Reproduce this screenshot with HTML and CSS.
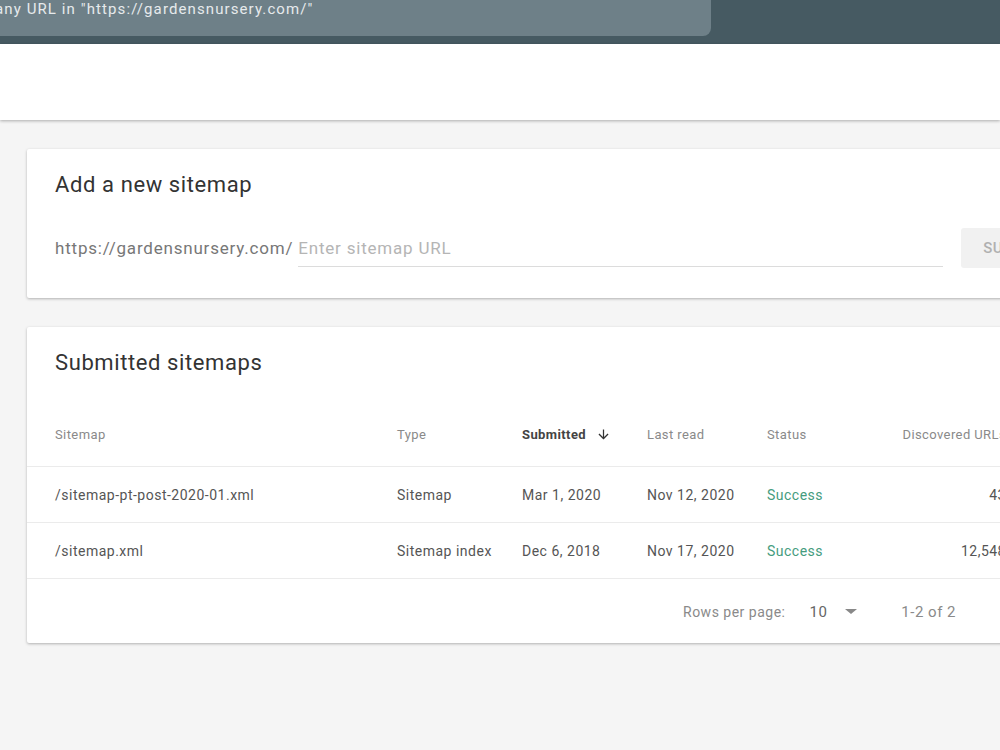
FILE: index.html
```html
<!DOCTYPE html>
<html lang="en">

<head>
    <meta charset="UTF-8">
    <title>Sitemaps</title>
    <link rel="stylesheet" href="styles.css">
</head>

<body>

    <div class="topbar">
        <div class="search">any URL in "https://gardensnursery.com/"</div>
    </div>

    <div class="subheader"></div>

    <div class="content">
        <div class="card add-card">
            <h2 class="card-title">Add a new sitemap</h2>
            <div class="add-row">
                <span class="prefix">https://gardensnursery.com/</span>
                <input class="url-input" type="text" placeholder="Enter sitemap URL">
                <button class="submit-btn" type="button">SUBMIT</button>
            </div>
        </div>

        <div class="card list-card">
            <h2 class="card-title">Submitted sitemaps</h2>
            <div class="table">
                <div class="row head">
                    <div>Sitemap</div>
                    <div>Type</div>
                    <div class="sorted">Submitted
                        <svg class="sort-icon" width="15" height="15" viewBox="0 0 24 24"><path d="M20 12l-1.41-1.41L13 16.17V4h-2v12.17l-5.58-5.59L4 12l8 8 8-8z" fill="#333"/></svg>
                    </div>
                    <div>Last read</div>
                    <div>Status</div>
                    <div class="num">Discovered URLs</div>
                </div>
                <div class="row">
                    <div>/sitemap-pt-post-2020-01.xml</div>
                    <div>Sitemap</div>
                    <div>Mar 1, 2020</div>
                    <div>Nov 12, 2020</div>
                    <div class="ok">Success</div>
                    <div class="num">43</div>
                </div>
                <div class="row">
                    <div>/sitemap.xml</div>
                    <div>Sitemap index</div>
                    <div>Dec 6, 2018</div>
                    <div>Nov 17, 2020</div>
                    <div class="ok">Success</div>
                    <div class="num">12,548</div>
                </div>
            </div>
            <div class="pager">
                <span class="pager-label">Rows per page:</span>
                <span class="pager-size">10</span>
                <span class="caret"></span>
                <span class="pager-range">1-2 of 2</span>
            </div>
        </div>
    </div>

</body>

</html>
```
FILE: styles.css
```css
body {
    margin: 0;
    width: 1000px;
    height: 750px;
    overflow: hidden;
    background-color: #f5f5f5;
    font-family: Roboto, "Liberation Sans", Arial, sans-serif;
    color: #444;
}

.topbar {
    height: 44px;
    background-color: #465a62;
}

.search {
    width: 731px;
    height: 36px;
    margin-left: -20px;
    padding-left: 15px;
    box-sizing: border-box;
    background-color: #6e8088;
    border-radius: 0 0 8px 0;
    color: #e6eaec;
    font-size: 15px;
    letter-spacing: 1.1px;
    line-height: 18px;
    white-space: nowrap;
}

.subheader {
    height: 76px;
    background-color: #fff;
    box-shadow: 0 1px 3px rgba(0, 0, 0, 0.3);
}

.content {
    padding: 29px 0 0 27px;
}

.card {
    width: 1010px;
    background-color: #fff;
    box-shadow: 0 1px 3px rgba(0, 0, 0, 0.28);
    border-radius: 2px;
    margin-bottom: 29px;
}

.card-title {
    margin: 0;
    padding: 24px 28px 0;
    font-size: 22px;
    font-weight: 400;
    letter-spacing: 0.6px;
    line-height: 24px;
    color: #333;
}

.add-card {
    height: 149px;
}

.add-row {
    display: flex;
    align-items: center;
    padding: 31px 0 0 28px;
    white-space: nowrap;
}

.prefix {
    flex-shrink: 0;
    font-size: 17px;
    letter-spacing: 0.8px;
    color: #777;
    margin-right: 5px;
}

.url-input {
    flex-shrink: 0;
    width: 645px;
    height: 36px;
    border: none;
    border-bottom: 1px solid #dcdcdc;
    padding: 0;
    outline: none;
    font-family: inherit;
    font-size: 17px;
    letter-spacing: 0.8px;
    color: #333;
}

.url-input::placeholder {
    color: #b5b5b5;
}

.submit-btn {
    flex-shrink: 0;
    margin-left: 18px;
    height: 40px;
    padding: 0 22px;
    border: none;
    border-radius: 3px;
    background-color: #f1f1f1;
    color: #b0b0b0;
    font-family: inherit;
    font-size: 15px;
    font-weight: 500;
    letter-spacing: 0.5px;
}

.list-card {
    height: 316px;
}

.table {
    margin-top: 27px;
}

.row {
    display: grid;
    grid-template-columns: 342px 125px 125px 120px 110px 129px;
    align-items: center;
    height: 55px;
    padding-left: 28px;
    border-bottom: 1px solid #ebebeb;
    font-size: 14px;
    letter-spacing: 0.5px;
    color: #555;
    white-space: nowrap;
}

.row.head {
    height: 64px;
    font-size: 13px;
    letter-spacing: 0.4px;
    color: #8a8a8a;
}

.sorted {
    display: flex;
    align-items: center;
    gap: 10px;
    font-weight: 700;
    color: #444;
}

.num {
    text-align: right;
}

.ok {
    color: #459c7e;
}

.pager {
    display: flex;
    align-items: center;
    height: 65px;
    padding-left: 656px;
    font-size: 14px;
    letter-spacing: 0.5px;
    color: #8a8a8a;
    white-space: nowrap;
}

.pager-size {
    margin-left: 24px;
    color: #666;
    font-size: 15px;
}

.caret {
    margin-left: 18px;
    width: 0;
    height: 0;
    border-left: 6px solid transparent;
    border-right: 6px solid transparent;
    border-top: 5px solid #888;
}

.pager-range {
    margin-left: 44px;
    font-size: 15px;
}
```
